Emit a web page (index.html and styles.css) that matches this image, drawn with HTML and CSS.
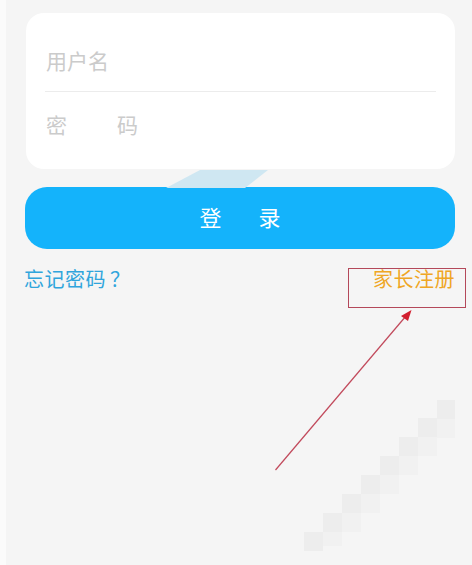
FILE: index.html
```html
<!DOCTYPE html>
<html lang="zh-CN">
<head>
<meta charset="utf-8">
<title>登录</title>
<link rel="stylesheet" href="styles.css">
</head>
<body>
<div class="page">
  <div class="card">
    <div class="field user"><span class="ph">用户名</span></div>
    <div class="divider"></div>
    <div class="field pass"><span class="ph">密</span><span class="ph gap">码</span></div>
  </div>
  <button class="login"><span>登</span><span>录</span></button>
  <div class="links">
    <a class="forgot">忘记密码<span class="qm">？</span></a>
    <a class="register">家长注册</a>
  </div>
  <div class="glare"></div>
  <div class="mark-box"></div>
  <svg class="annot" width="472" height="565" viewBox="0 0 472 565" xmlns="http://www.w3.org/2000/svg">
    <line x1="275.5" y1="470" x2="406" y2="316" stroke="#c24a5c" stroke-width="1.2"/>
    <polygon points="411.5,310 401,316 408,321" fill="#d21f2f"/>
    <g fill="#ededed">
      <rect x="304" y="532" width="19" height="19"/>
      <rect x="323" y="513" width="19" height="19"/>
      <rect x="342" y="494" width="19" height="19"/>
      <rect x="361" y="475" width="19" height="19"/>
      <rect x="380" y="456" width="19" height="19"/>
      <rect x="399" y="437" width="19" height="19"/>
      <rect x="418" y="418" width="19" height="19"/>
      <rect x="437" y="400" width="18" height="19"/>
    </g>
    <g fill="#f1f1f1">
      <rect x="323" y="532" width="19" height="14"/>
      <rect x="342" y="513" width="19" height="19"/>
      <rect x="361" y="494" width="19" height="19"/>
      <rect x="380" y="475" width="19" height="19"/>
      <rect x="399" y="456" width="19" height="19"/>
      <rect x="418" y="437" width="19" height="19"/>
      <rect x="437" y="419" width="18" height="19"/>
    </g>
  </svg>
</div>
</body>
</html>
```

FILE: styles.css
```css
* { box-sizing: border-box; }
html, body { margin: 0; padding: 0; }
body {
  background: #f5f5f5;
  font-family: "Noto Sans CJK SC", "Noto Sans", sans-serif;
  width: 472px;
  height: 565px;
  overflow: hidden;
}
.page {
  position: relative;
  width: 472px;
  height: 565px;
  border-left: 6px solid #fbfbfb;
  padding: 13px 17px 0 19px;
}
.card {
  background: #ffffff;
  border-radius: 18px;
  width: 429px;
  height: 156px;
  margin-left: 1px;
  display: flex;
  flex-direction: column;
  padding: 0 19px 0 20px;
}
.field {
  display: flex;
  align-items: center;
  font-size: 21px;
}
.field.user { height: 78px; padding-top: 16px; }
.field.pass { height: 77px; padding-bottom: 12px; }
.ph { color: #cbcbcb; line-height: 1; }
.ph.gap { margin-left: 50px; }
.divider {
  height: 1px;
  background: #ececec;
  margin-left: -1px;
}
.login {
  display: flex;
  justify-content: center;
  align-items: center;
  gap: 37px;
  width: 430px;
  height: 62px;
  margin-top: 18px;
  border: none;
  border-radius: 22px;
  background: #14b3fb;
  color: #ffffff;
  font-family: inherit;
  font-size: 22px;
  padding: 0 0 4px 0;
}
.links {
  display: flex;
  justify-content: space-between;
  align-items: center;
  width: 430px;
  margin-top: 17px;
  margin-left: -1px;
  font-size: 20px;
  line-height: 26px;
}
.forgot { color: #30a5dc; letter-spacing: 0.5px; }
.qm { margin-left: 4px; }
.register { color: #efa624; letter-spacing: 0.5px; margin-right: -1px; }
.glare {
  position: absolute;
  left: 160px;
  top: 170px;
  width: 102px;
  height: 18px;
  background: #cfe7f2;
  clip-path: polygon(34px 0, 102px 0, 79px 18px, 0 18px);
}
.mark-box {
  position: absolute;
  left: 342px;
  top: 268px;
  width: 118px;
  height: 40px;
  border: 1px solid #b4485a;
}
.annot {
  position: absolute;
  left: -6px;
  top: 0;
  pointer-events: none;
}
```
